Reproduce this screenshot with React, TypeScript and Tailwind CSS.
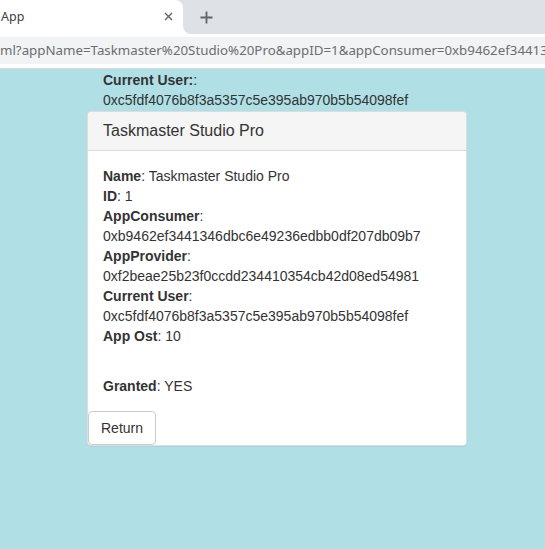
import React from "react";

function TabStrip() {
  return (
    <div className="flex h-[34px] bg-[#dee1e6]">
      <div className="relative flex w-[183px] items-center rounded-tr-[8px] bg-white">
        <span className="ml-[1px] font-['Noto_Sans',sans-serif] text-[12.5px] text-[#3c4043]">App</span>
        <svg className="absolute left-[164px] top-[12px]" width="9" height="9" viewBox="0 0 9 9">
          <path d="M1 1 L8 8 M8 1 L1 8" stroke="#5f6368" strokeWidth="1.4" />
        </svg>
      </div>
      <div className="flex-1 bg-white">
        <div className="flex h-full items-center rounded-bl-[8px] bg-[#dee1e6]">
          <svg className="ml-[17px]" width="13" height="13" viewBox="0 0 13 13">
            <path d="M6.5 0.5 V12.5 M0.5 6.5 H12.5" stroke="#5f6368" strokeWidth="1.8" />
          </svg>
        </div>
      </div>
    </div>
  );
}

function Toolbar() {
  return (
    <div className="h-[35px] border-b border-[#dadce0] bg-white pt-[3px]">
      <div className="flex h-[27px] items-center overflow-hidden bg-[#f1f3f4]">
        <span className="whitespace-nowrap font-['Noto_Sans',sans-serif] text-[13.3px] text-[#6b6e72]">
          ml?appName=Taskmaster%20Studio%20Pro&amp;appID=1&amp;appConsumer=0xb9462ef34413
        </span>
      </div>
    </div>
  );
}

function Field({ label, value, wrap }: { label: string; value: string; wrap?: boolean }) {
  if (wrap) {
    return (
      <>
        <div>
          <b>{label}</b>:
        </div>
        <div>{value}</div>
      </>
    );
  }
  return (
    <div>
      <b>{label}</b>: {value}
    </div>
  );
}

export default function App() {
  const user = "0xc5fdf4076b8f3a5357c5e395ab970b5b54098fef";
  return (
    <div className="flex h-[549px] w-[545px] flex-col overflow-hidden">
      <TabStrip />
      <Toolbar />
      <main className="flex-1 bg-[#b0e0e6] pt-[1px] font-['Liberation_Sans',Arial,sans-serif] text-[14px] leading-5 text-[#333]">
        <div className="ml-[87px] w-[380px]">
          <div className="pl-4">
            <div>
              <b>Current User:</b>:
            </div>
            <div>{user}</div>
          </div>
          <div className="mt-px rounded border border-[#ddd] bg-white shadow-[0_1px_1px_rgba(0,0,0,0.05)]">
            <div className="rounded-t border-b border-[#ddd] bg-[#f5f5f5] px-[15px] py-[10px]">
              <h3 className="text-[16px] leading-[17.6px] text-[#333]">Taskmaster Studio Pro</h3>
            </div>
            <div className="p-[15px]">
              <Field label="Name" value="Taskmaster Studio Pro" />
              <Field label="ID" value="1" />
              <Field label="AppConsumer" value="0xb9462ef3441346dbc6e49236edbb0df207db09b7" wrap />
              <Field label="AppProvider" value="0xf2beae25b23f0ccdd234410354cb42d08ed54981" wrap />
              <Field label="Current User" value={user} wrap />
              <Field label="App Ost" value="10" />
              <div className="mt-[30px]">
                <Field label="Granted" value="YES" />
              </div>
            </div>
            <button className="rounded border border-[#ccc] bg-white px-3 py-1.5 text-[14px] leading-5 text-[#333]">
              Return
            </button>
          </div>
        </div>
      </main>
    </div>
  );
}
